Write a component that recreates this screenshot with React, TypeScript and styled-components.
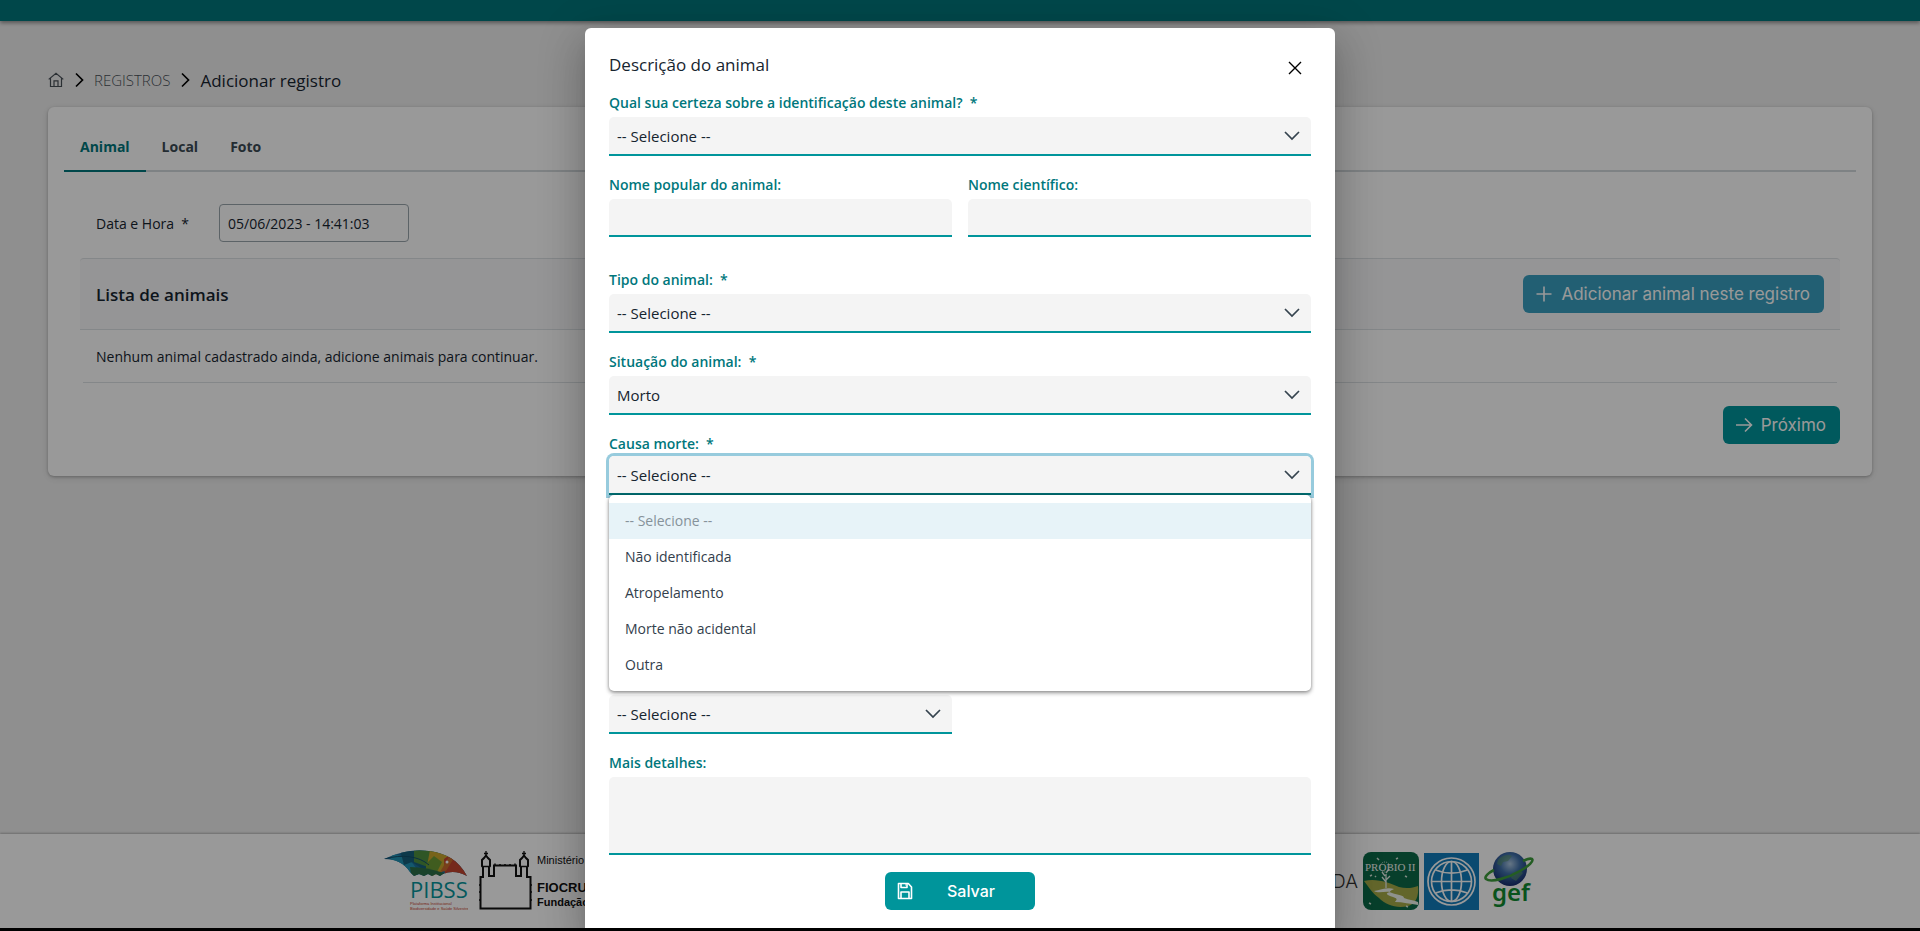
import React from 'react';
import styled, { createGlobalStyle } from 'styled-components';

const GlobalStyle = createGlobalStyle`
  *, *::before, *::after { box-sizing: border-box; }
  html, body { margin: 0; padding: 0; }
  body, button, input, select, textarea {
    font-family: 'Open Sans', 'Noto Sans', sans-serif;
    font-size: 15px;
  }
  body { background: #000; color: #16242f; }
`;

const teal = '#00959b';
const tealDark = '#00777c';

const Shell = styled.div`
  position: relative;
  display: flex;
  flex-direction: column;
  min-height: 100vh;
  border-bottom: 3px solid #000;
  background: #efefef;
`;

const TopBar = styled.header`
  height: 21px;
  background: ${tealDark};
  box-shadow: 0 2px 4px rgba(0, 0, 0, 0.4);
`;

const Main = styled.main`
  flex: 1;
  padding: 47px 48px 0;
`;

const Breadcrumb = styled.nav`
  display: flex;
  align-items: center;
  gap: 10px;
  height: 24px;
  margin-bottom: 15px;
`;

const CrumbLink = styled.a`
  display: flex;
  color: #495057;
  font-weight: 300;
  text-decoration: none;
`;

const CrumbCurrent = styled.span`
  font-size: 17px;
  font-weight: 500;
`;

const Card = styled.section`
  padding: 16px 16px 32px;
  border-radius: 6px;
  background: #fff;
  box-shadow: 0 1px 3px rgba(0, 0, 0, 0.25), 0 2px 8px rgba(0, 0, 0, 0.1);
`;

const Tabs = styled.div`
  display: flex;
  border-bottom: 2px solid #d3d9dc;
`;

const Tab = styled.button<{ $active?: boolean }>`
  height: 49px;
  margin-bottom: -2px;
  padding: 0 16px;
  border: 0;
  border-bottom: 2px solid ${(p) => (p.$active ? tealDark : 'transparent')};
  background: none;
  color: ${(p) => (p.$active ? tealDark : '#3b4a54')};
  font-size: 14px;
  font-weight: 700;
`;

const CardBody = styled.div`
  padding: 32px 16px 0;
`;

const DateRow = styled.div`
  display: flex;
  align-items: center;
  gap: 30px;
  padding: 0 16px 16px;
`;

const DateLabel = styled.label`
  font-size: 14px;
`;

const DateInput = styled.input`
  width: 190px;
  height: 38px;
  padding: 0 8px;
  border: 1px solid #9aa5ac;
  border-radius: 4px;
  background: #fff;
  color: #16242f;
  font-size: 14px;
`;

const ListHeader = styled.div`
  display: flex;
  align-items: center;
  justify-content: space-between;
  height: 72px;
  padding: 0 16px;
  border: 1px solid #dde1e4;
  border-width: 1px 0;
  border-radius: 4px 4px 0 0;
  background: #f8f9fa;
`;

const ListTitle = styled.h2`
  margin: 0;
  font-size: 17px;
  font-weight: 600;
`;

const EmptyRow = styled.p`
  margin: 0 3px;
  padding: 2px 13px 0;
  border-bottom: 1px solid #dde1e4;
  font-size: 14px;
  line-height: 50px;
`;

const Actions = styled.div<{ $align: string }>`
  display: flex;
  justify-content: ${(p) => p.$align};
`;

const CardActions = styled(Actions)`
  padding-top: 23px;
`;

const Button = styled.button<{ $tone?: string }>`
  display: flex;
  align-items: center;
  gap: 8px;
  height: 38px;
  padding: 0 14px 0 12px;
  border: 0;
  border-radius: 6px;
  background: ${(p) => p.$tone || teal};
  color: #fff;
  font-family: Inter, sans-serif;
  font-size: 17px;
`;

const SaveButton = styled(Button)`
  width: 150px;
  font-size: 16px;
  font-weight: 500;
`;

const SaveText = styled.span`
  flex: 1;
  text-align: center;
`;

const Footer = styled.footer`
  display: flex;
  justify-content: center;
  height: 94px;
  background: #fff;
  box-shadow: 0 -1px 2px rgba(0, 0, 0, 0.25);
`;

const Partners = styled.div`
  display: flex;
  align-items: center;
  justify-content: space-between;
  flex: 1;
  max-width: 1152px;
  height: 94px;
`;

const LogoGroup = styled.div<{ $gap: number }>`
  display: flex;
  align-items: center;
  gap: ${(p) => p.$gap}px;
`;

const FiocruzText = styled.div`
  font-family: 'Liberation Sans', Arial, sans-serif;
  font-size: 11px;
  line-height: 15px;
  color: #111;
  white-space: nowrap;
`;

const FiocruzName = styled.strong`
  display: block;
  margin-top: 12px;
  font-size: 13px;
  font-weight: 700;
`;

const FiocruzFoundation = styled.span`
  font-weight: 700;
`;

const PartnerWord = styled.span`
  color: #333;
  font-family: Inter, sans-serif;
  font-size: 19px;
  font-weight: 300;
`;

const Overlay = styled.div`
  position: absolute;
  inset: 0;
  display: flex;
  justify-content: center;
  padding-top: 28px;
  overflow: hidden;
  background: rgba(0, 0, 0, 0.4);
`;

const Dialog = styled.section`
  width: 750px;
  padding: 22px 24px 20px;
  border-radius: 6px 6px 0 0;
  background: #fff;
  box-shadow: 0 11px 15px -7px rgba(0, 0, 0, 0.2), 0 24px 38px 3px rgba(0, 0, 0, 0.14),
    0 9px 46px 8px rgba(0, 0, 0, 0.12);
`;

const DialogHeader = styled.header`
  display: flex;
  align-items: flex-start;
  justify-content: space-between;
  height: 32px;
  margin-bottom: 9px;
`;

const DialogTitle = styled.h1`
  margin: 0;
  font-size: 17px;
  font-weight: 500;
  line-height: 30px;
`;

const CloseButton = styled.button`
  display: flex;
  align-items: center;
  justify-content: center;
  width: 32px;
  height: 32px;
  padding: 4px 0 0;
  border: 0;
  background: none;
  color: #000;
`;

const Form = styled.form`
  display: flex;
  flex-direction: column;
  gap: 17px;
`;

const FieldRow = styled.div`
  display: grid;
  grid-template-columns: 1fr 1fr;
  gap: 16px;
`;

const NameRow = styled(FieldRow)`
  padding-bottom: 14px;
`;

const Field = styled.div`
  position: relative;
  display: flex;
  flex-direction: column;
  gap: 2px;
`;

const CauseField = styled(Field)`
  gap: 0;
`;

const Label = styled.label`
  color: ${tealDark};
  font-size: 14px;
  font-weight: 600;
  line-height: 24px;
`;

const SelectWrap = styled.div<{ $focused?: boolean }>`
  position: relative;
  display: flex;
  border-radius: 5px 5px 0 0;
  box-shadow: ${(p) => (p.$focused ? '0 0 0 3px #97cbdd' : 'none')};
  color: #35434e;

  svg {
    position: absolute;
    top: 13px;
    right: 11px;
    pointer-events: none;
  }
`;

const Select = styled.select<{ $focused?: boolean }>`
  width: 100%;
  height: 39px;
  padding: 0 8px;
  border: 0;
  border-bottom: 2px solid ${(p) => (p.$focused ? '#006f73' : teal)};
  border-radius: 5px 5px 0 0;
  outline: 0;
  appearance: none;
  background: #f4f4f4;
  color: #16242f;
`;

const TextInput = styled.input`
  width: 100%;
  height: 38px;
  padding: 0 8px;
  border: 0;
  border-bottom: 2px solid ${teal};
  border-radius: 5px 5px 0 0;
  background: #f4f4f4;
`;

const TextArea = styled.textarea`
  display: block;
  width: 100%;
  height: 78px;
  padding: 8px;
  border: 0;
  border-bottom: 2px solid ${teal};
  border-radius: 5px 5px 0 0;
  resize: none;
  background: #f4f4f4;
`;

const UnlabelledRow = styled(FieldRow)`
  padding-top: 183px;
`;

const Menu = styled.ul`
  position: absolute;
  z-index: 2;
  top: 100%;
  left: 0;
  right: 0;
  margin: 0;
  padding: 8px 0;
  border-radius: 5px;
  background: #fff;
  box-shadow: 0 2px 4px rgba(0, 0, 0, 0.4), 0 0 3px rgba(0, 0, 0, 0.2);
  list-style: none;
`;

const MenuItem = styled.li<{ $selected?: boolean }>`
  padding: 1px 16px;
  background: ${(p) => (p.$selected ? '#e7f3f8' : 'transparent')};
  color: ${(p) => (p.$selected ? '#86929a' : '#33404c')};
  font-size: 14px;
  line-height: 34px;
`;

const ChevronDown = () => (
  <svg width="16" height="12" viewBox="0 0 16 12" fill="none" stroke="currentColor" strokeWidth="1.700" aria-hidden="true">
    <path d="M1 2 8 9l7-7" />
  </svg>
);

const ChevronRight = () => (
  <svg width="10" height="16" viewBox="0 0 10 16" fill="none" stroke="#000" strokeWidth="1.700" aria-hidden="true">
    <path d="M2 1.500 8.500 8 2 14.500" />
  </svg>
);

const HomeIcon = () => (
  <svg width="16" height="16" viewBox="0 0 16 16" fill="none" stroke="currentColor" strokeWidth="1.200" aria-hidden="true">
    <path d="M.7 7.400 8 1.200l7.300 6.200M2.500 6.200v8.300h11V6.200M6 14.500V8.800h4v5.700" />
  </svg>
);

const PlusIcon = () => (
  <svg width="18" height="18" viewBox="0 0 18 18" stroke="currentColor" strokeWidth="1.600" aria-hidden="true">
    <path d="M9 1.500v15M1.500 9h15" />
  </svg>
);

const ArrowIcon = () => (
  <svg width="18" height="16" viewBox="0 0 18 16" fill="none" stroke="currentColor" strokeWidth="1.600" aria-hidden="true">
    <path d="M1 8h15.500M10 1.500 16.500 8 10 14.500" />
  </svg>
);

const SaveIcon = () => (
  <svg width="16" height="18" viewBox="0 0 16 18" fill="none" stroke="currentColor" strokeWidth="1.600" strokeLinejoin="round" aria-hidden="true">
    <path d="M1.500 1.500h9.800L14.500 5v11.500h-13zM4 1.500v4h6v-4M4 16.500V10h8v6.500M8 3h.5" />
  </svg>
);

const CloseIcon = () => (
  <svg width="14" height="14" viewBox="0 0 14 14" stroke="currentColor" strokeWidth="1.400" aria-hidden="true">
    <path d="M1 1l12 12M13 1 1 13" />
  </svg>
);

const PibssLogo = () => (
  <svg width="84" height="62" viewBox="0 0 84 62" role="img" aria-label="PIBSS">
    <defs>
      <clipPath id="leaf">
        <path d="M0 9C14 2 30-1 45 1c16 2 30 9 38 25-9-5-17-5-24-2l-3 2-4-2-4 2-4-2-4 2-5-2-5 2-4-4C20 13 12 9 0 9Z" />
      </clipPath>
    </defs>
    <g clipPath="url(#leaf)">
      <rect width="84" height="30" fill="#1c6e9c" />
      <path d="M8 3c10 4 20 4 28 22H20L6 12Z" fill="#2193b4" />
      <path d="M16 0h26l6 12-8 8-12-8-8 3Z" fill="#17607c" />
      <path d="M30 0h26l-4 12-8 5-14-5Z" fill="#4f9040" />
      <path d="M46 0h22l-10 22-8 5-8-6Z" fill="#c9a52c" />
      <path d="M42 14l8-8 8 6-6 12-10-3Z" fill="#6c9a35" />
      <path d="M26 17c12 0 22 2 34 6v8H28Z" fill="#2c6f49" />
      <path d="M60 9l7-5 20 20v6c-9-4-16-5-26-3Z" fill="#c4452f" />
      <path d="M66 5l4 3-8 13-6 1Z" fill="#c96c2c" />
      <path d="M0 9c18-5 35-3 45 6" fill="none" stroke="#124f6b" />
    </g>
    <circle cx="63" cy="12" r="1.500" fill="#fff" />
    <text x="26" y="48" fill="#07959b" fontFamily="'Open Sans', sans-serif" fontSize="22">PIBSS</text>
    <text x="26" y="55" fill="#c8432c" fontFamily="'Liberation Sans', sans-serif" fontSize="4">Plataforma Institucional</text>
    <text x="26" y="60" fill="#c8432c" fontFamily="'Liberation Sans', sans-serif" fontSize="4">Biodiversidade e Saúde Silvestre</text>
  </svg>
);

const CastleLogo = () => (
  <svg width="53" height="60" viewBox="0 0 53 60" fill="none" stroke="#111" strokeWidth="2" aria-hidden="true">
    <path d="M1.500 57.500V26H4V16L3 15V9l2-2 2-2.500L9 7l2 2v6l-1 1v9h5V14.500h22V25h5V16l-1-1V9l2-2 2-2.500L47 7l2 2v6l-1 1v10h3.500v31.500Z" />
    <path d="M7 0v6M45 0v6M4 15.500h6M42 15.500h6M5 2.500h4M43 2.500h4" strokeWidth="1.300" />
    <path d="M16 12.500v2M21 13v2M26 13v2M31 13v2M36 12.500v2M0 34h2M0 41h2M0 49h2M51 34h2M51 41h2M51 49h2" strokeWidth="1.500" />
  </svg>
);

const ProbioLogo = () => (
  <svg width="56" height="58" viewBox="0 0 56 58" role="img" aria-label="PROBIO II">
    <rect width="56" height="58" rx="8" fill="#0d6a49" />
    <path d="M1 29c13-3 25 2 35 6 7 2 14 1 19-1 1 10-2 18-10 20-11 3-22-1-29-8C9 41 5 34 1 29Z" fill="#a5aa49" />
    <path d="M11 39c7-1 13-4 20-2-4 2-6 3-2 4 6 2 12 2 12 5 5 2 9 2 14 4v3c-8-1-15-3-23-3 1-2 4-3-2-5-7-2-8-4-3-5-6-1-11 2-16-1Z" fill="#eef3ec" />
    <path d="M23 36V22m0 8-4-5m4 3 4-4m-5 0-3-4m4 1 3-4" stroke="#e3ece5" strokeWidth="1.300" fill="none" />
    <circle cx="22" cy="15" r="5" fill="none" stroke="#cfe3d6" strokeDasharray="1 1" />
    <text x="2" y="19" fill="#f4f7f4" fontFamily="'Liberation Serif', serif" fontSize="11">PROBIO II</text>
    <path d="M14 6l2 2M33 7l2-1M7 24l2-1M42 24l2 1M6 51l2 1M43 54l2 1M12 24l1 1" stroke="#d5e6da" strokeWidth="1.500" />
  </svg>
);

const GlobeLogo = () => (
  <svg width="55" height="57" viewBox="0 0 55 57" fill="none" stroke="#fff" strokeWidth="1.700" aria-hidden="true">
    <rect width="55" height="57" fill="#127cbb" stroke="none" />
    <circle cx="27.500" cy="28.500" r="23.500" />
    <circle cx="27.500" cy="28.500" r="20" />
    <ellipse cx="27.500" cy="28.500" rx="10" ry="20" />
    <path d="M27.500 8.500v40M7.500 28.500h40M11.500 17c10 4 22 4 32 0M11.500 40c10-4 22-4 32 0" />
  </svg>
);

const GefLogo = () => (
  <svg width="52" height="60" viewBox="0 0 52 60" role="img" aria-label="gef">
    <defs>
      <radialGradient id="planet" cx="0.5" cy="0.35" r="0.65">
        <stop offset="0" stopColor="#a9c4de" />
        <stop offset="0.45" stopColor="#3f6fa8" />
        <stop offset="1" stopColor="#162c6e" />
      </radialGradient>
    </defs>
    <circle cx="26" cy="18" r="17" fill="url(#planet)" />
    <path d="M14 9c4-5 10-6 14-4l-4 5-5 1-2 4-4-2ZM28 22l8-3 3 3-7 8-5-3Z" fill="#568f6a" opacity="0.6" />
    <path d="M10 19C4 22 0 26 2 28c5 4 22-1 34-8 9-5 14-10 12-12-2-1-5 0-9 2" fill="none" stroke="#3c9c3b" strokeWidth="2.600" />
    <text x="8" y="50" fill="#0f8a2f" fontFamily="'Noto Sans', sans-serif" fontSize="24" fontWeight="600">gef</text>
  </svg>
);

type SelectControlProps = { id: string; value: string; focused?: boolean; name?: string };

const SelectControl = ({ id, value, focused, name }: SelectControlProps) => (
  <SelectWrap $focused={focused}>
    <Select id={id} $focused={focused} aria-label={name} defaultValue={value}>
      <option>{value}</option>
    </Select>
    <ChevronDown />
  </SelectWrap>
);

type SelectFieldProps = { id: string; label: string; value: string };

const SelectField = ({ id, label, value }: SelectFieldProps) => (
  <Field>
    <Label htmlFor={id}>{label}</Label>
    <SelectControl id={id} value={value} />
  </Field>
);

const PLACEHOLDER = '-- Selecione --';
const CAUSES = [PLACEHOLDER, 'Não identificada', 'Atropelamento', 'Morte não acidental', 'Outra'];

export default function App() {
  return (
    <>
      <GlobalStyle />
      <Shell>
        <TopBar />
        <Main>
          <Breadcrumb aria-label="Navegação">
            <CrumbLink href="#" aria-label="Início"><HomeIcon /></CrumbLink>
            <ChevronRight />
            <CrumbLink href="#">REGISTROS</CrumbLink>
            <ChevronRight />
            <CrumbCurrent>Adicionar registro</CrumbCurrent>
          </Breadcrumb>
          <Card>
            <Tabs>
              <Tab type="button" $active>Animal</Tab>
              <Tab type="button">Local</Tab>
              <Tab type="button">Foto</Tab>
            </Tabs>
            <CardBody>
              <DateRow>
                <DateLabel htmlFor="data">Data e Hora&nbsp; *</DateLabel>
                <DateInput id="data" defaultValue="05/06/2023 - 14:41:03" />
              </DateRow>
              <ListHeader>
                <ListTitle>Lista de animais</ListTitle>
                <Button type="button" $tone="#3a9fc0"><PlusIcon />Adicionar animal neste registro</Button>
              </ListHeader>
              <EmptyRow>Nenhum animal cadastrado ainda, adicione animais para continuar.</EmptyRow>
              <CardActions $align="flex-end">
                <Button type="button"><ArrowIcon />Próximo</Button>
              </CardActions>
            </CardBody>
          </Card>
        </Main>
        <Footer>
          <Partners>
            <LogoGroup $gap={11}>
              <PibssLogo />
              <LogoGroup $gap={5}>
                <CastleLogo />
                <FiocruzText>
                  Ministério da Saúde
                  <FiocruzName>FIOCRUZ</FiocruzName>
                  <FiocruzFoundation>Fundação Oswaldo Cruz</FiocruzFoundation>
                </FiocruzText>
              </LogoGroup>
            </LogoGroup>
            <LogoGroup $gap={5}>
              <PartnerWord>DA</PartnerWord>
              <ProbioLogo />
              <GlobeLogo />
              <GefLogo />
            </LogoGroup>
          </Partners>
        </Footer>
        <Overlay>
          <Dialog role="dialog" aria-modal="true" aria-labelledby="dialog-title">
            <DialogHeader>
              <DialogTitle id="dialog-title">Descrição do animal</DialogTitle>
              <CloseButton type="button" aria-label="Fechar"><CloseIcon /></CloseButton>
            </DialogHeader>
            <Form>
              <SelectField id="certeza" label={'Qual sua certeza sobre a identificação deste animal?\u00a0 *'} value={PLACEHOLDER} />
              <NameRow>
                <Field>
                  <Label htmlFor="popular">Nome popular do animal:</Label>
                  <TextInput id="popular" />
                </Field>
                <Field>
                  <Label htmlFor="cientifico">Nome científico:</Label>
                  <TextInput id="cientifico" />
                </Field>
              </NameRow>
              <SelectField id="tipo" label={'Tipo do animal:\u00a0 *'} value={PLACEHOLDER} />
              <SelectField id="situacao" label={'Situação do animal:\u00a0 *'} value="Morto" />
              <CauseField>
                <Label htmlFor="causa">Causa morte:&nbsp; *</Label>
                <SelectControl id="causa" value={PLACEHOLDER} focused />
                <Menu role="listbox" aria-label="Causa morte">
                  {CAUSES.map((cause, i) => (
                    <MenuItem key={cause} role="option" aria-selected={i === 0} $selected={i === 0}>{cause}</MenuItem>
                  ))}
                </Menu>
              </CauseField>
              <UnlabelledRow>
                <SelectControl id="detalhe" name="Característica" value={PLACEHOLDER} />
              </UnlabelledRow>
              <Field>
                <Label htmlFor="mais">Mais detalhes:</Label>
                <TextArea id="mais" />
              </Field>
              <Actions $align="center">
                <SaveButton type="button"><SaveIcon /><SaveText>Salvar</SaveText></SaveButton>
              </Actions>
            </Form>
          </Dialog>
        </Overlay>
      </Shell>
    </>
  );
}
